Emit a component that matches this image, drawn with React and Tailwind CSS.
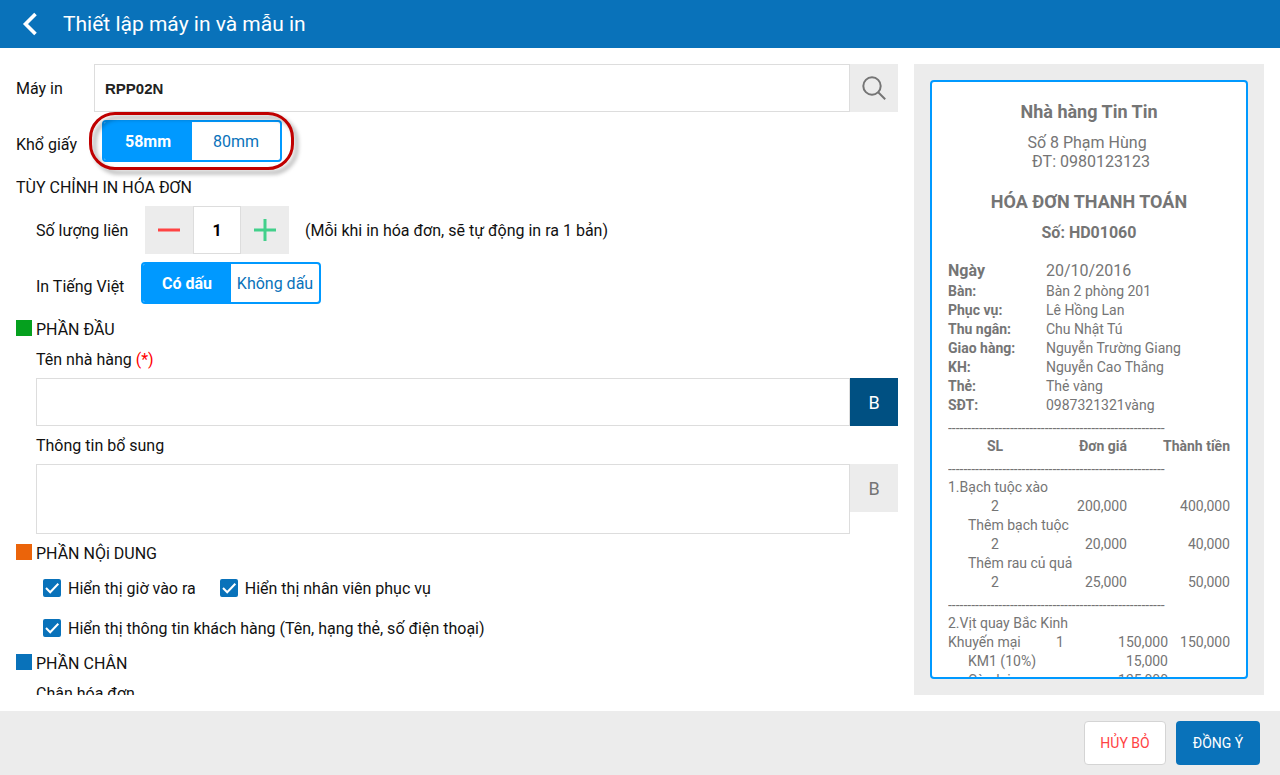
import { useState } from 'react';

const DASHES = '-'.repeat(56);

const customerInfo = [
    ['Bàn:', 'Bàn 2 phòng 201'],
    ['Phục vụ:', 'Lê Hồng Lan'],
    ['Thu ngân:', 'Chu Nhật Tú'],
    ['Giao hàng:', 'Nguyễn Trường Giang'],
    ['KH:', 'Nguyễn Cao Thắng'],
    ['Thẻ:', 'Thẻ vàng'],
    ['SĐT:', '0987321321vàng'],
];

const dishes = [
    { name: '1.Bạch tuộc xào', qty: '2', price: '200,000', total: '400,000' },
    { name: 'Thêm bạch tuộc', qty: '2', price: '20,000', total: '40,000', extra: true },
    { name: 'Thêm rau củ quả', qty: '2', price: '25,000', total: '50,000', extra: true },
];

/**
 * Two-option segmented control
 */
const Toggle = ({ label, options, value, onChange }) => (
    <div
        role="group"
        aria-label={label}
        className="flex w-[180px] h-[42px] shrink-0 rounded border-2 border-[#0099ff] bg-white overflow-hidden"
    >
        {options.map((option) => (
            <button
                key={option}
                type="button"
                aria-pressed={value === option}
                onClick={() => onChange(option)}
                className={`flex-1 basis-0 pt-0.5 whitespace-nowrap ${
                    value === option ? 'bg-[#0099ff] text-white font-bold' : 'text-[#0972ba]'
                }`}
            >
                {option}
            </button>
        ))}
    </div>
);

const SectionTitle = ({ color, children }) => (
    <div className="flex items-center gap-1 h-[38px]">
        <span className={`w-4 h-4 mb-0.5 ${color}`} />
        <h2 className="pt-0.5">{children}</h2>
    </div>
);

const BoldButton = ({ active, onClick }) => (
    <button
        type="button"
        aria-pressed={active}
        onClick={onClick}
        className={`w-12 h-12 pt-0.5 shrink-0 text-lg ${
            active ? 'bg-[#005082] text-white' : 'bg-[#ececec] text-[#757575]'
        }`}
    >
        B
    </button>
);

const CheckOption = ({ children }) => (
    <label className="flex items-center gap-[7px] h-8">
        <span className="relative w-[18px] h-[18px] shrink-0">
            <input
                type="checkbox"
                defaultChecked
                className="peer block appearance-none w-[18px] h-[18px] rounded-xs border-2 border-[#0972ba] checked:bg-[#0972ba]"
            />
            <svg
                viewBox="0 0 18 18"
                className="absolute inset-0 hidden peer-checked:block pointer-events-none"
                fill="none"
                stroke="white"
                strokeWidth="2"
            >
                <path d="M3 9l4.2 4.2L15.3 4.8" />
            </svg>
        </span>
        <span className="pt-0.5">{children}</span>
    </label>
);

const Divider = () => <div className="h-[22px] pt-[5px] leading-4 whitespace-nowrap overflow-hidden">{DASHES}</div>;

const Receipt = () => (
    <div className="h-full overflow-hidden rounded border-2 border-[#0099ff] bg-white px-4 pt-[17px] text-sm leading-[19px] text-[#757575]">
        <div className="text-center text-base leading-[19px]">
            <p className="text-lg leading-[26px] font-bold">Nhà hàng Tin Tin</p>
            <p className="mt-2 whitespace-pre">{'Số 8 Phạm Hùng '}</p>
            <p className="whitespace-pre">{' ĐT: 0980123123'}</p>
            <p className="mt-[18px] text-lg leading-[26px] font-bold">HÓA ĐƠN THANH TOÁN</p>
            <p className="mt-2 font-bold">Số: HD01060</p>
        </div>

        <dl className="mt-[18px] grid grid-cols-[98px_1fr]">
            <dt className="text-base leading-[22px] font-bold">Ngày</dt>
            <dd className="text-base leading-[22px]">20/10/2016</dd>
            {customerInfo.map(([label, value]) => (
                <div key={label} className="contents">
                    <dt className="font-bold">{label}</dt>
                    <dd>{value}</dd>
                </div>
            ))}
        </dl>

        <Divider />
        <table className="w-full table-fixed">
            <colgroup>
                <col className="w-[94px]" />
                <col className="w-[85px]" />
                <col />
            </colgroup>
            <thead>
                <tr>
                    <th className="text-center font-bold">SL</th>
                    <th className="text-right font-bold">Đơn giá</th>
                    <th className="text-right font-bold">Thành tiền</th>
                </tr>
                <tr>
                    <td colSpan={3}>
                        <Divider />
                    </td>
                </tr>
            </thead>
            {dishes.map((dish) => (
                <tbody key={dish.name}>
                    <tr>
                        <td colSpan={3} className={dish.extra ? 'pl-5' : ''}>
                            {dish.name}
                        </td>
                    </tr>
                    <tr>
                        <td className="text-center">{dish.qty}</td>
                        <td className="text-right">{dish.price}</td>
                        <td className="text-right">{dish.total}</td>
                    </tr>
                </tbody>
            ))}
        </table>

        <Divider />
        <p>2.Vịt quay Bắc Kinh</p>
        <table className="w-full table-fixed">
            <colgroup>
                <col className="w-[98px]" />
                <col className="w-7" />
                <col className="w-[94px]" />
                <col />
            </colgroup>
            <tbody>
                <tr>
                    <td>Khuyến mại</td>
                    <td className="text-center">1</td>
                    <td className="text-right">150,000</td>
                    <td className="text-right">150,000</td>
                </tr>
                <tr>
                    <td className="pl-5">KM1 (10%)</td>
                    <td />
                    <td className="text-right">15,000</td>
                    <td />
                </tr>
                <tr>
                    <td className="pl-5">Còn lại</td>
                    <td />
                    <td className="text-right">135,000</td>
                    <td />
                </tr>
            </tbody>
        </table>
    </div>
);

const App = () => {
    const [paper, setPaper] = useState('58mm');
    const [accent, setAccent] = useState('Có dấu');
    const [copies, setCopies] = useState(1);
    const [boldName, setBoldName] = useState(true);
    const [boldInfo, setBoldInfo] = useState(false);

    return (
        <div className="flex flex-col h-screen overflow-hidden bg-white font-['Roboto',sans-serif] text-base leading-[22px] text-[#111111]">
            {/* Header */}
            <header className="flex items-center h-12 shrink-0 bg-[#0972ba] text-white">
                <button type="button" aria-label="Quay lại" className="flex items-center justify-center w-[60px] h-12">
                    <svg width="16" height="24" viewBox="0 0 16 24" fill="none" stroke="white" strokeWidth="3.6">
                        <path d="M13.5 2L3.5 12l10 10" />
                    </svg>
                </button>
                <h1 className="pl-[3px] text-[21px]">Thiết lập máy in và mẫu in</h1>
            </header>

            {/* Body */}
            <main className="flex flex-1 min-h-0 gap-4 p-4">
                <form className="flex-1 min-w-0 overflow-hidden">
                    <div className="flex items-center">
                        <label htmlFor="printer" className="w-[78px] pt-0.5">Máy in</label>
                        <input
                            id="printer"
                            defaultValue="RPP02N"
                            className="flex-1 min-w-0 h-12 px-2.5 border border-[#dddddd] font-['Liberation_Sans',sans-serif] text-[15px] font-bold text-[#222222] outline-none"
                        />
                        <button type="button" aria-label="Tìm máy in" className="flex items-center justify-center w-12 h-12 bg-[#ececec]">
                            <svg width="24" height="24" viewBox="0 0 24 24" fill="none" stroke="#757575" strokeWidth="2">
                                <circle cx="10" cy="10" r="8.7" />
                                <path d="M16.2 16.2l7 7" />
                            </svg>
                        </button>
                    </div>

                    <div className="flex mt-2 h-12">
                        <span className="w-[86px] leading-[50px]">Khổ giấy</span>
                        <div className="relative h-[42px]">
                            <Toggle label="Khổ giấy" options={['58mm', '80mm']} value={paper} onChange={setPaper} />
                            {/* Highlight ring */}
                            <div className="absolute -top-2 -bottom-2 -left-[13px] -right-3 rounded-[26px] border-3 border-[#c00000] drop-shadow-[4px_4px_2px_rgba(0,0,0,0.35)] pointer-events-none" />
                        </div>
                    </div>

                    <h2 className="h-[38px] leading-[40px]">TÙY CHỈNH IN HÓA ĐƠN</h2>
                    <div className="flex items-center pl-5">
                        <label htmlFor="copies" className="w-[109px] pt-0.5">Số lượng liên</label>
                        <button
                            type="button"
                            aria-label="Giảm"
                            onClick={() => setCopies(Math.max(1, copies - 1))}
                            className="flex items-center justify-center w-12 h-12 bg-[#ececec]"
                        >
                            <svg width="24" height="24" viewBox="0 0 24 24" stroke="#ff4343" strokeWidth="3">
                                <path d="M1 12h22" />
                            </svg>
                        </button>
                        <input
                            id="copies"
                            value={copies}
                            onChange={(e) => setCopies(Number(e.target.value) || 1)}
                            className="w-12 h-12 border border-[#dddddd] text-center font-bold text-black outline-none"
                        />
                        <button
                            type="button"
                            aria-label="Tăng"
                            onClick={() => setCopies(copies + 1)}
                            className="flex items-center justify-center w-12 h-12 bg-[#ececec]"
                        >
                            <svg width="24" height="24" viewBox="0 0 24 24" stroke="#43d08b" strokeWidth="3">
                                <path d="M1 12h22M12 1v22" />
                            </svg>
                        </button>
                        <span className="pl-4 pt-0.5">(Mỗi khi in hóa đơn, sẽ tự động in ra {copies} bản)</span>
                    </div>
                    <div className="flex mt-2 h-12 pl-5">
                        <span className="w-[105px] leading-[50px]">In Tiếng Việt</span>
                        <Toggle label="In Tiếng Việt" options={['Có dấu', 'Không dấu']} value={accent} onChange={setAccent} />
                    </div>

                    <SectionTitle color="bg-[#05a01e]">PHẦN ĐẦU</SectionTitle>
                    <div className="pl-5">
                        <label htmlFor="restaurant" className="block mb-1.5 leading-6">
                            Tên nhà hàng <span className="text-[#ff0000]">(*)</span>
                        </label>
                        <div className="flex">
                            <input id="restaurant" className="flex-1 min-w-0 h-12 px-2.5 border border-[#dddddd] outline-none" />
                            <BoldButton active={boldName} onClick={() => setBoldName(!boldName)} />
                        </div>
                        <label htmlFor="extra" className="block h-[38px] leading-[40px]">Thông tin bổ sung</label>
                        <div className="flex items-start">
                            <textarea
                                id="extra"
                                className="block flex-1 min-w-0 h-[70px] p-2.5 border border-[#dddddd] resize-none outline-none"
                            />
                            <BoldButton active={boldInfo} onClick={() => setBoldInfo(!boldInfo)} />
                        </div>
                    </div>

                    <SectionTitle color="bg-[#eb640a]">PHẦN NỘi DUNG</SectionTitle>
                    <div className="flex flex-wrap gap-x-6 gap-y-2 max-w-[560px] pl-[27px]">
                        <CheckOption>Hiển thị giờ vào ra</CheckOption>
                        <CheckOption>Hiển thị nhân viên phục vụ</CheckOption>
                        <CheckOption>Hiển thị thông tin khách hàng (Tên, hạng thẻ, số điện thoại)</CheckOption>
                    </div>

                    <SectionTitle color="bg-[#0972ba]">PHẦN CHÂN</SectionTitle>
                    <p className="pl-5 leading-6">Chân hóa đơn</p>
                </form>

                <aside className="w-[350px] shrink-0 bg-[#ececec] p-4">
                    <Receipt />
                </aside>
            </main>

            {/* Footer */}
            <footer className="flex items-center justify-end gap-2.5 h-16 shrink-0 px-5 bg-[#ececec] text-sm">
                <button type="button" className="min-w-[82px] h-11 px-3 rounded border border-[#d4d4d4] bg-white text-[#ff4343]">
                    HỦY BỎ
                </button>
                <button type="button" className="min-w-[84px] h-11 px-3 rounded bg-[#0972ba] text-white">
                    ĐỒNG Ý
                </button>
            </footer>
        </div>
    );
};

export default App;
